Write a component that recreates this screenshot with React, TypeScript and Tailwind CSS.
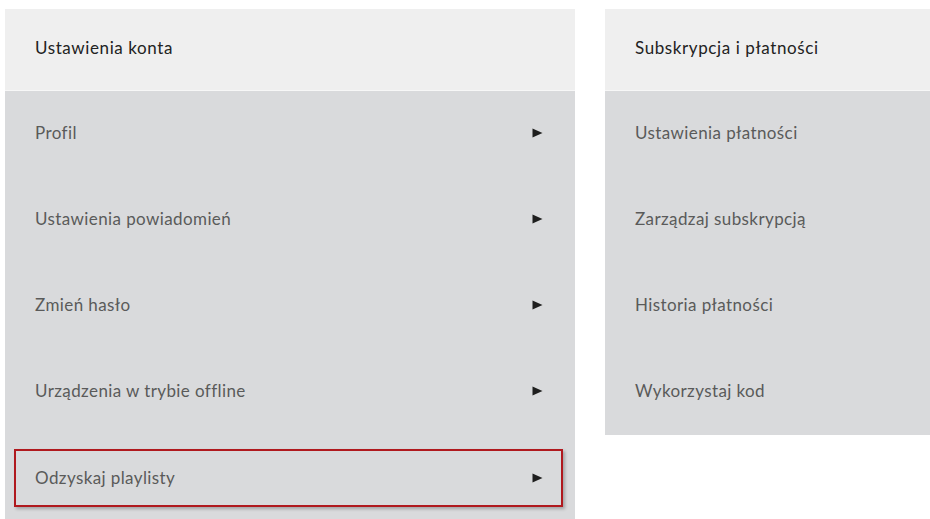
import React from "react";

const Tri = () => (
  <svg width="11" height="10" viewBox="0 0 11 10" className="shrink-0">
    <path d="M0.5 0.5 L10.5 5 L0.5 9.5 Z" fill="#1e1e1e" />
  </svg>
);

const leftItems = [
  "Profil",
  "Ustawienia powiadomień",
  "Zmień hasło",
  "Urządzenia w trybie offline",
  "Odzyskaj playlisty",
];

const rightItems = [
  "Ustawienia płatności",
  "Zarządzaj subskrypcją",
  "Historia płatności",
  "Wykorzystaj kod",
];

export default function App() {
  return (
    <div
      className="w-[930px] h-[519px] overflow-hidden bg-white flex items-start pt-[9px] pl-[5px] gap-[30px]"
      style={{ fontFamily: "Lato, 'Open Sans', sans-serif" }}
    >
      <div className="w-[570px] flex flex-col shrink-0">
        <div className="h-[82px] pb-[3px] bg-[#efefef] border-b border-[#f7f7f7] flex items-center pl-[30px] text-[17px] tracking-[0.6px] text-[#222] font-normal">
          Ustawienia konta
        </div>
        <div className="bg-[#d9dadc] flex flex-col">
          {leftItems.map((t, i) =>
            i === 4 ? (
              <div key={t} className="h-[86px] flex items-center px-[9px]">
                <div className="w-[549px] h-[58px] border-2 border-[#b0191e] shadow-[2px_2px_3px_rgba(0,0,0,0.25)] flex items-center justify-between pl-[19px] pr-[18px] pb-[1px] text-[17px] tracking-[0.4px] text-[#5a5a5a]">
                  <span>{t}</span>
                  <Tri />
                </div>
              </div>
            ) : (
              <div
                key={t}
                className="h-[86px] pb-[2px] flex items-center justify-between pl-[30px] pr-[32px] text-[17px] tracking-[0.4px] text-[#5a5a5a]"
              >
                <span>{t}</span>
                <Tri />
              </div>
            )
          )}
        </div>
      </div>
      <div className="w-[325px] flex flex-col shrink-0">
        <div className="h-[82px] pb-[3px] bg-[#efefef] border-b border-[#f7f7f7] flex items-center pl-[30px] text-[17px] tracking-[0.6px] text-[#222] font-normal">
          Subskrypcja i płatności
        </div>
        <div className="bg-[#d9dadc] flex flex-col">
          {rightItems.map((t) => (
            <div key={t} className="h-[86px] pb-[2px] flex items-center pl-[30px] text-[17px] tracking-[0.4px] text-[#5a5a5a]">
              {t}
            </div>
          ))}
        </div>
      </div>
    </div>
  );
}
